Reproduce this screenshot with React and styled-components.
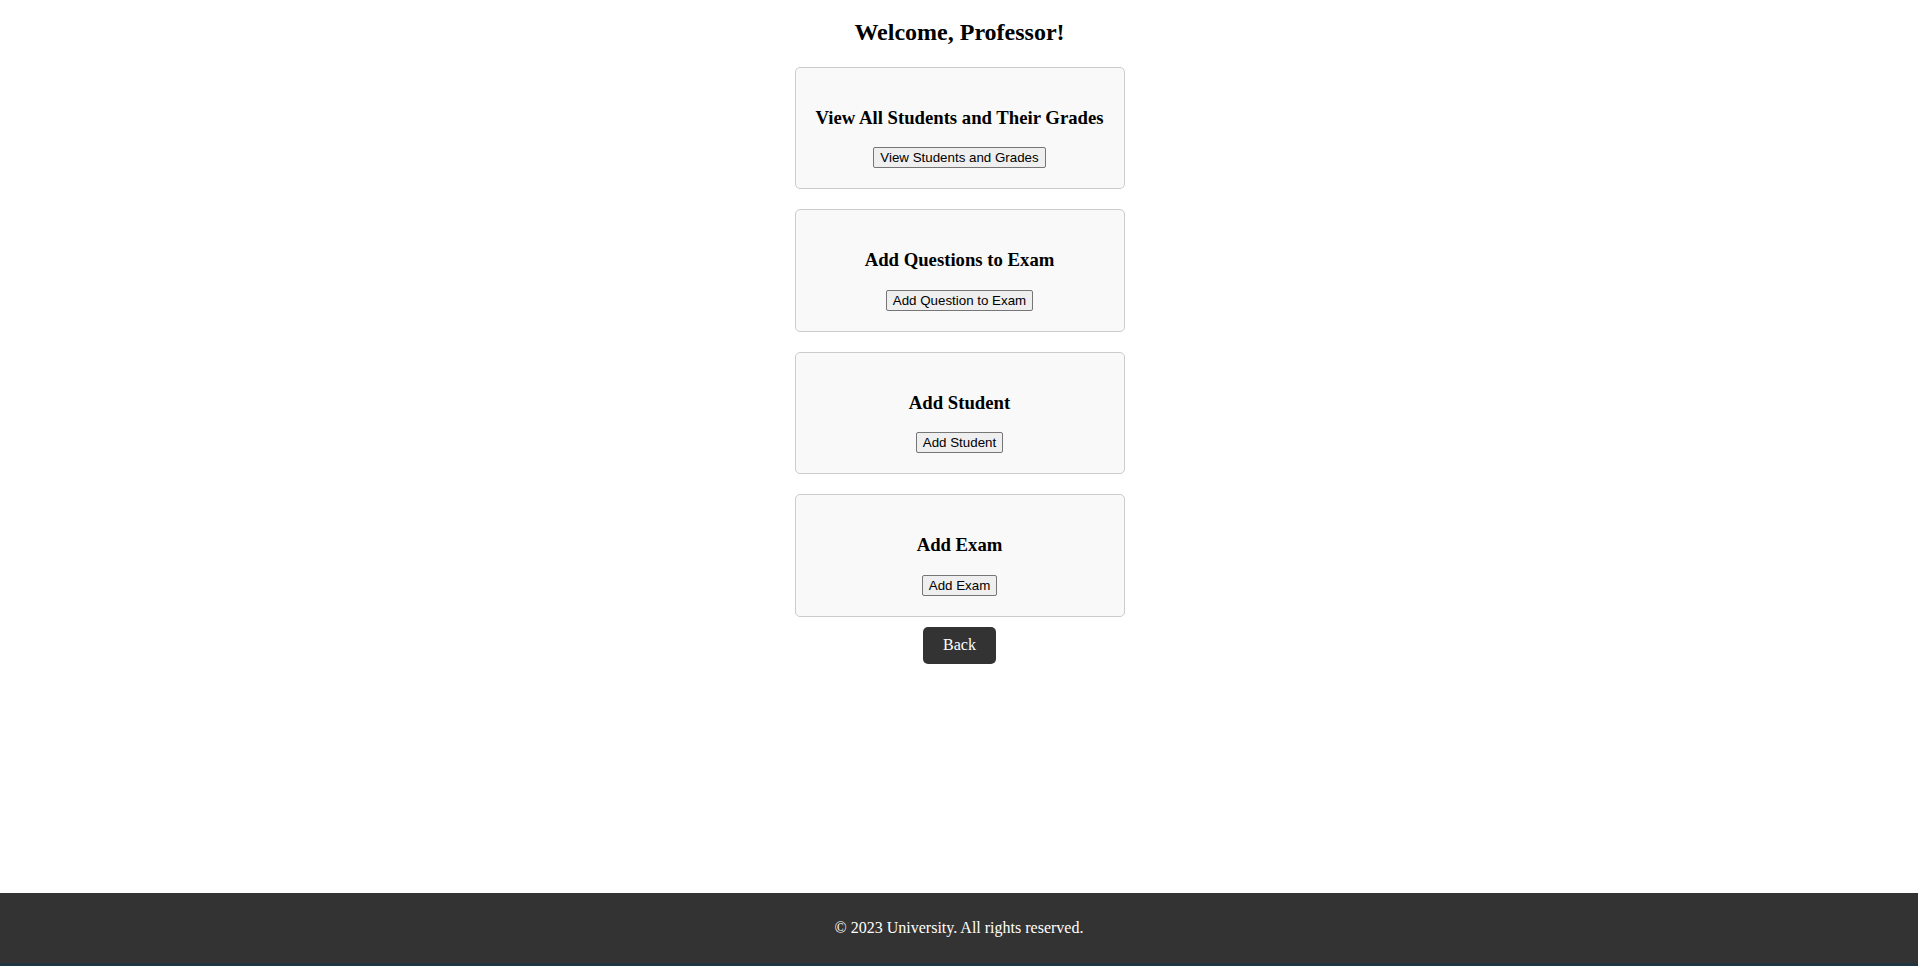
import styled, { createGlobalStyle } from "styled-components"

const GlobalStyle = createGlobalStyle`
  html, body {
    margin: 0;
    padding: 0;
  }
  body {
    font-family: "Liberation Serif", "Times New Roman", serif;
    background: #fff;
    color: #000;
  }
`

const actions = [
  { title: "View All Students and Their Grades", label: "View Students and Grades" },
  { title: "Add Questions to Exam", label: "Add Question to Exam" },
  { title: "Add Student", label: "Add Student" },
  { title: "Add Exam", label: "Add Exam" },
]

const App = () => {
  return (
    <Page>
      <GlobalStyle />
      <Main>
        <Title>Welcome, Professor!</Title>
        <CardList>
          {actions.map((a) => (
            <Card key={a.title}>
              <CardTitle>{a.title}</CardTitle>
              <ActionButton>{a.label}</ActionButton>
            </Card>
          ))}
        </CardList>
        <BackButton>Back</BackButton>
      </Main>
      <Footer>
        <p>© 2023 University. All rights reserved.</p>
      </Footer>
      <BottomStripe />
    </Page>
  )
}

const Page = styled.div`
  display: flex;
  flex-direction: column;
  min-height: 100vh;
`

const Main = styled.main`
  flex: 1;
  display: flex;
  flex-direction: column;
  align-items: center;
  padding-left: 1px;
`

const Title = styled.h2`
  font-size: 24px;
  font-weight: bold;
  line-height: 28px;
  margin: 18px 0 21px;
`

const CardList = styled.div`
  display: flex;
  flex-direction: column;
  gap: 20px;
`

const Card = styled.section`
  box-sizing: border-box;
  width: 330px;
  padding: 20px 10px;
  background-color: #f9f9f9;
  border: 1px solid #ccc;
  border-radius: 5px;
  text-align: center;
`

const CardTitle = styled.h3`
  font-size: 18.72px;
  font-weight: bold;
  line-height: 22px;
  white-space: nowrap;
  margin: 18.72px 0;
`

const ActionButton = styled.button`
  font-family: "Liberation Sans", Arial, sans-serif;
  font-size: 13.33px;
  line-height: 15px;
  height: 21px;
  padding: 1px 6px;
  color: #000;
  background-color: #efefef;
  border: 1px solid #767676;
  border-radius: 2px;
  cursor: pointer;
`

const BackButton = styled.button`
  margin-top: 10px;
  height: 37px;
  padding: 0 20px;
  font-family: "Liberation Serif", "Times New Roman", serif;
  font-size: 16px;
  color: #fff;
  background-color: #333;
  border: none;
  border-radius: 5px;
  cursor: pointer;
`

const Footer = styled.footer`
  height: 70px;
  display: flex;
  align-items: center;
  justify-content: center;
  background-color: #333;
  color: #fff;
  font-size: 16px;
  p {
    margin: 0;
  }
`

const BottomStripe = styled.div`
  height: 3px;
  background-color: #1f3640;
`

export default App
